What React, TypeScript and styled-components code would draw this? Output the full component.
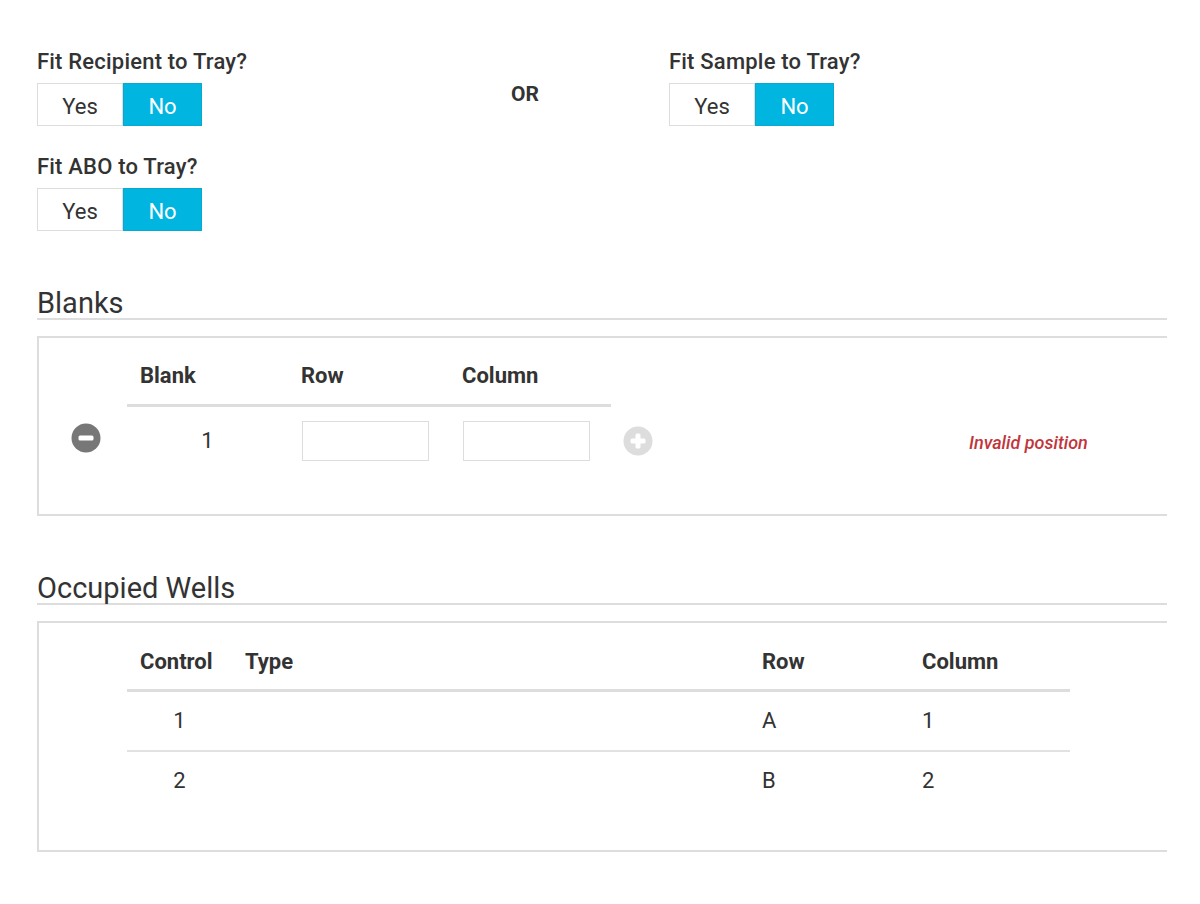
import React from "react";
import styled, { createGlobalStyle } from "styled-components";

const GlobalStyle = createGlobalStyle`
    html, body {
        margin: 0;
        padding: 0;
        background: #ffffff;
    }
    body {
        font-family: Roboto, "Noto Sans", "Liberation Sans", sans-serif;
        color: #333333;
    }
`;

type ToggleProps = { value: boolean };

function YesNo({ value }: ToggleProps) {
    return (
        <ToggleWrap>
            <ToggleBtn $active={value} $wide>
                Yes
            </ToggleBtn>
            <ToggleBtn $active={!value}>No</ToggleBtn>
        </ToggleWrap>
    );
}

function MinusIcon() {
    return (
        <svg width="30" height="30" viewBox="0 0 30 30">
            <circle cx="15" cy="15" r="14.5" fill="#777777" />
            <rect x="7.5" y="12.5" width="15" height="5" rx="1.5" fill="#ffffff" />
        </svg>
    );
}

function PlusIcon() {
    return (
        <svg width="30" height="30" viewBox="0 0 30 30">
            <circle cx="15" cy="15" r="14.5" fill="#dddddd" />
            <rect x="7.5" y="12.5" width="15" height="5" rx="1.5" fill="#ffffff" />
            <rect x="12.5" y="7.5" width="5" height="15" rx="1.5" fill="#ffffff" />
        </svg>
    );
}

const wells = [
    { control: 1, type: "", row: "A", column: 1 },
    { control: 2, type: "", row: "B", column: 2 },
];

export default function App() {
    return (
        <Page>
            <GlobalStyle />
            <FitRow>
                <FitColumn $width={474}>
                    <Field>
                        <Label>Fit Recipient to Tray?</Label>
                        <YesNo value={false} />
                    </Field>
                    <Field>
                        <Label>Fit ABO to Tray?</Label>
                        <YesNo value={false} />
                    </Field>
                </FitColumn>
                <OrText>OR</OrText>
                <FitColumn>
                    <Field>
                        <Label>Fit Sample to Tray?</Label>
                        <YesNo value={false} />
                    </Field>
                </FitColumn>
            </FitRow>

            <Section $top={57}>
                <SectionTitle>Blanks</SectionTitle>
                <Clip>
                    <Panel $height={180}>
                        <BlankGrid>
                            <span />
                            <HeadCell>Blank</HeadCell>
                            <HeadCell>Row</HeadCell>
                            <HeadCell>Column</HeadCell>
                            <HeadLine />
                            <IconCell>
                                <MinusIcon />
                            </IconCell>
                            <NumCell>1</NumCell>
                            <InputCell>
                                <PosInput />
                            </InputCell>
                            <InputCell>
                                <PosInput />
                            </InputCell>
                            <AddCell>
                                <PlusIcon />
                            </AddCell>
                            <ErrorText>Invalid position</ErrorText>
                        </BlankGrid>
                    </Panel>
                </Clip>
            </Section>

            <Section $top={57}>
                <SectionTitle>Occupied Wells</SectionTitle>
                <Clip>
                    <Panel $height={231}>
                        <WellsTable>
                            <colgroup>
                                <col style={{ width: 105 }} />
                                <col style={{ width: 517 }} />
                                <col style={{ width: 160 }} />
                                <col style={{ width: 161 }} />
                            </colgroup>
                            <thead>
                                <tr>
                                    <Th>Control</Th>
                                    <Th>Type</Th>
                                    <Th>Row</Th>
                                    <Th>Column</Th>
                                </tr>
                            </thead>
                            <tbody>
                                {wells.map((w) => (
                                    <tr key={w.control}>
                                        <Td $center>{w.control}</Td>
                                        <Td>{w.type}</Td>
                                        <Td>{w.row}</Td>
                                        <Td>{w.column}</Td>
                                    </tr>
                                ))}
                            </tbody>
                        </WellsTable>
                    </Panel>
                </Clip>
            </Section>
        </Page>
    );
}

const Page = styled.div`
    padding: 50px 0 40px 37px;
    width: 1130px;
`;

const FitRow = styled.div`
    display: flex;
    flex-direction: row;
`;

const FitColumn = styled.div<{ $width?: number }>`
    display: flex;
    flex-direction: column;
    gap: 29px;
    width: ${(p) => (p.$width ? `${p.$width}px` : "auto")};
`;

const Field = styled.div`
    display: flex;
    flex-direction: column;
    gap: 9px;
`;

const Label = styled.div`
    font-size: 22px;
    line-height: 24px;
    font-weight: 500;
    letter-spacing: 0.2px;
    color: #333333;
`;

const OrText = styled.div`
    width: 158px;
    box-sizing: border-box;
    padding-top: 33px;
    font-size: 21px;
    line-height: 22px;
    font-weight: 700;
    color: #333333;
`;

const ToggleWrap = styled.div`
    display: flex;
    flex-direction: row;
`;

const ToggleBtn = styled.div<{ $active: boolean; $wide?: boolean }>`
    box-sizing: border-box;
    height: 43px;
    width: ${(p) => (p.$wide ? "86px" : "79px")};
    padding-top: 3px;
    display: flex;
    align-items: center;
    justify-content: center;
    font-size: 22px;
    border: 1px solid ${(p) => (p.$active ? "#07a9d1" : "#dddddd")};
    background: ${(p) => (p.$active ? "#00b6e1" : "#ffffff")};
    color: ${(p) => (p.$active ? "#ffffff" : "#333333")};
`;

const Section = styled.div<{ $top: number }>`
    margin-top: ${(p) => p.$top}px;
`;

const SectionTitle = styled.div`
    font-size: 29px;
    line-height: 30px;
    color: #333333;
    border-bottom: 2px solid #dddddd;
`;

const Clip = styled.div`
    margin-top: 16px;
    overflow: hidden;
`;

const Panel = styled.div<{ $height: number }>`
    box-sizing: border-box;
    width: 1200px;
    height: ${(p) => p.$height}px;
    border: 2px solid #dddddd;
`;

const BlankGrid = styled.div`
    display: grid;
    grid-template-columns: 88px 161px 161px 162px 358px auto;
    align-items: start;
`;

const HeadCell = styled.div`
    padding: 25px 0 0 13px;
    height: 66px;
    box-sizing: border-box;
    font-size: 22px;
    line-height: 26px;
    font-weight: 700;
    color: #333333;
`;

const HeadLine = styled.div`
    grid-column: 2 / 5;
    height: 3px;
    background: #dddddd;
`;

const IconCell = styled.div`
    grid-column: 1;
    padding: 16px 0 0 32px;
`;

const NumCell = styled.div`
    padding-top: 21px;
    text-align: center;
    font-size: 22px;
    line-height: 26px;
`;

const InputCell = styled.div`
    padding: 14px 0 0 14px;
`;

const PosInput = styled.input`
    box-sizing: border-box;
    width: 127px;
    height: 40px;
    border: 1px solid #dddddd;
    outline: none;
    font-family: inherit;
    font-size: 18px;
`;

const AddCell = styled.div`
    padding: 19px 0 0 12px;
`;

const ErrorText = styled.div`
    padding-top: 26px;
    font-size: 18px;
    line-height: 20px;
    font-weight: 500;
    font-style: italic;
    white-space: nowrap;
    color: #c1353b;
`;

const WellsTable = styled.table`
    margin-left: 88px;
    width: 943px;
    border-collapse: collapse;
    table-layout: fixed;

    & tbody tr:first-child td {
        border-bottom: 2px solid #e2e2e2;
    }
`;

const Th = styled.th`
    text-align: left;
    padding: 26px 0 14px 13px;
    font-size: 22px;
    line-height: 26px;
    font-weight: 700;
    color: #333333;
    border-bottom: 3px solid #dddddd;
`;

const Td = styled.td<{ $center?: boolean }>`
    text-align: ${(p) => (p.$center ? "center" : "left")};
    padding: 16px 0 16px ${(p) => (p.$center ? "0" : "13px")};
    font-size: 22px;
    line-height: 26px;
    color: #333333;
`;
